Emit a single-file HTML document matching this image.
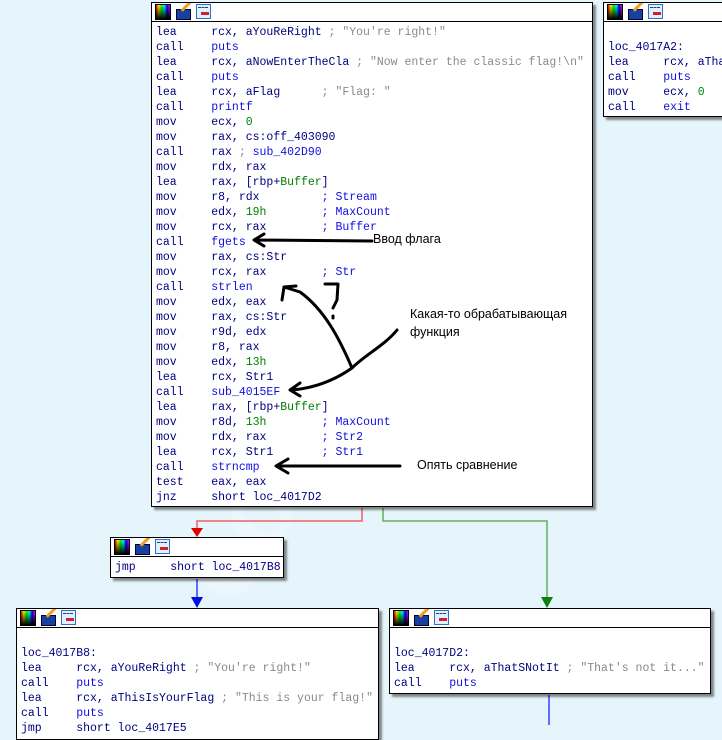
<!DOCTYPE html>
<html><head><meta charset="utf-8">
<style>
html,body{margin:0;padding:0;}
body{width:722px;height:725px;overflow:hidden;background:#e6f5fb;position:relative;font-family:"Liberation Mono",monospace;}
.blk{position:absolute;background:#fff;border:1px solid #000;box-shadow:3px 3px 2px rgba(0,0,0,0.45);overflow:hidden;}
.hdr{height:18px;border-bottom:1px solid #000;position:relative;}
.ic{position:absolute;top:1px;width:15px;height:15px;}
.i1{left:3px;background:linear-gradient(90deg,#f00,#ff0,#0f0,#0ff,#00f,#f0f);border:1px solid #000;width:14px;height:14px;}
.i1:after{content:"";position:absolute;inset:0;background:linear-gradient(180deg,rgba(0,0,0,0),#000);}
.i2{left:24px;background:#1840a0;border:1px solid #003;width:13px;height:9px;top:6px;}
.i2:after{content:"";position:absolute;left:3px;top:-5px;width:12px;height:3px;background:#f0a020;transform:rotate(-45deg);}
.i3{left:44px;background:#dff0ff;border:1px solid #3070c0;width:13px;height:13px;}
.i3:after{content:"";position:absolute;left:4px;top:7px;width:8px;height:3px;background:#d02030;}
.i3:before{content:"";position:absolute;left:1px;top:2px;width:10px;height:2px;border-top:1px dashed #204080;}
pre{margin:0;font-family:"Liberation Mono",monospace;font-size:11.5px;line-height:15px;color:#000080;padding:3px 0 0 4px;white-space:pre;}
.b{color:#1010e0}.g{color:#008000}.c{color:#8a8a8a}
.ann{position:absolute;font-family:"Liberation Sans",sans-serif;font-size:12.5px;color:#000;}
</style></head><body>
<div style="position:absolute;left:45px;top:290px;width:640px;text-align:center;font-family:'Liberation Sans',sans-serif;font-size:110px;font-weight:bold;color:rgba(255,255,255,0.22);transform:rotate(-55deg);white-space:nowrap;">codeby.net</div>

<svg width="722" height="725" style="position:absolute;left:0;top:0">
<polyline points="362,508 362,521 197,521 197,530" fill="none" stroke="#f06060" stroke-width="1.5"/>
<polygon points="191,528 203,528 197,537" fill="#e00000"/>
<polyline points="383,508 383,521 547,521 547,600" fill="none" stroke="#60b060" stroke-width="1.5"/>
<polygon points="541,597 553,597 547,608" fill="#108010"/>
<line x1="197" y1="579" x2="197" y2="600" stroke="#3040ff" stroke-width="1.5"/>
<polygon points="191,597 203,597 197,608" fill="#0010e0"/>
<line x1="549" y1="695" x2="549" y2="725" stroke="#3040ff" stroke-width="1.5"/>
</svg>

<div class="blk" style="left:151px;top:2px;width:440px;height:503px;">
<div class="hdr"><div class="ic i1"></div><div class="ic i2"></div><div class="ic i3"></div></div>
<pre>lea     rcx, aYouReRight <span class="c">; "You're right!"</span>
call    <span class="b">puts</span>
lea     rcx, aNowEnterTheCla <span class="c">; "Now enter the classic flag!\n"</span>
call    <span class="b">puts</span>
lea     rcx, aFlag      <span class="c">; "Flag: "</span>
call    <span class="b">printf</span>
mov     ecx, <span class="g">0</span>
mov     rax, cs:off_403090
call    rax <span class="c">;</span> <span class="b">sub_402D90</span>
mov     rdx, rax
lea     rax, [rbp+<span class="g">Buffer</span>]
mov     r8, rdx         <span class="b">; Stream</span>
mov     edx, <span class="g">19h</span>        <span class="b">; MaxCount</span>
mov     rcx, rax        <span class="b">; Buffer</span>
call    <span class="b">fgets</span>
mov     rax, cs:Str
mov     rcx, rax        <span class="b">; Str</span>
call    <span class="b">strlen</span>
mov     edx, eax
mov     rax, cs:Str
mov     r9d, edx
mov     r8, rax
mov     edx, <span class="g">13h</span>
lea     rcx, Str1
call    <span class="b">sub_4015EF</span>
lea     rax, [rbp+<span class="g">Buffer</span>]
mov     r8d, <span class="g">13h</span>        <span class="b">; MaxCount</span>
mov     rdx, rax        <span class="b">; Str2</span>
lea     rcx, Str1       <span class="b">; Str1</span>
call    <span class="b">strncmp</span>
test    eax, eax
jnz     short loc_4017D2</pre>
</div>

<div class="blk" style="left:603px;top:2px;width:125px;height:113px;border-right:none;">
<div class="hdr"><div class="ic i1"></div><div class="ic i2"></div><div class="ic i3"></div></div>
<pre>

loc_4017A2:
lea     rcx, aThatSNotIt
call    <span class="b">puts</span>
mov     ecx, <span class="g">0</span>
call    <span class="b">exit</span></pre>
</div>

<div class="blk" style="left:110px;top:537px;width:172px;height:39px;">
<div class="hdr"><div class="ic i1"></div><div class="ic i2"></div><div class="ic i3"></div></div>
<pre>jmp     short loc_4017B8</pre>
</div>

<div class="blk" style="left:16px;top:608px;width:361px;height:130px;">
<div class="hdr"><div class="ic i1"></div><div class="ic i2"></div><div class="ic i3"></div></div>
<pre>

loc_4017B8:
lea     rcx, aYouReRight <span class="c">; "You're right!"</span>
call    <span class="b">puts</span>
lea     rcx, aThisIsYourFlag <span class="c">; "This is your flag!"</span>
call    <span class="b">puts</span>
jmp     short loc_4017E5</pre>
</div>

<div class="blk" style="left:389px;top:608px;width:320px;height:84px;">
<div class="hdr"><div class="ic i1"></div><div class="ic i2"></div><div class="ic i3"></div></div>
<pre>

loc_4017D2:
lea     rcx, aThatSNotIt <span class="c">; "That's not it..."</span>
call    <span class="b">puts</span></pre>
</div>

<svg width="722" height="725" style="position:absolute;left:0;top:0" fill="none" stroke="#000" stroke-width="3" stroke-linecap="round" stroke-linejoin="round">
<path d="M372,241 L258,240 M264,234 L254,240 L264,246"/>
<path d="M352,368 C340,340 325,310 300,292 L284,287 L282,300 M284,287 L296,286"/>
<path d="M397,330 C385,345 365,355 352,368 C335,380 315,388 292,390 M300,383 L290,390 L300,396"/>
<path d="M325,284 L338,284 L337,300 L333,308 M333,316 L333,318"/>
<path d="M400,466 L280,466 M288,459 L276,466 L288,473"/>
</svg>
<div class="ann" style="left:373px;top:232px;">Ввод флага</div>
<div class="ann" style="left:410px;top:307px;">Какая-то обрабатывающая</div>
<div class="ann" style="left:410px;top:325px;">функция</div>
<div class="ann" style="left:417px;top:458px;">Опять сравнение</div>
</body></html>
